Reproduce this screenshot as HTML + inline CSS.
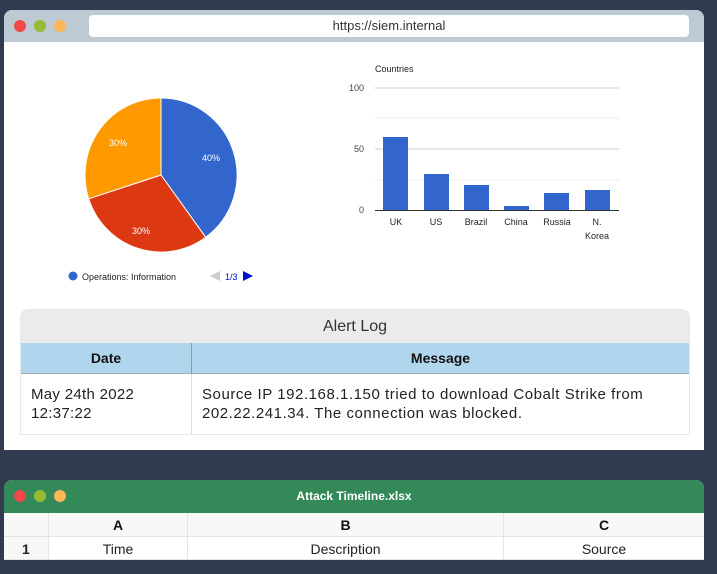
<!DOCTYPE html>
<html><head><style>
body{margin:0;width:717px;height:574px;background:#323a4f;position:relative;overflow:hidden;font-family:"Liberation Sans",sans-serif;}
.win{position:absolute;left:4px;width:700px;}
.dot{position:absolute;top:12px;width:12px;height:12px;border-radius:50%;}
</style></head><body>
<div class="win" style="top:10px;height:440px;background:#fff;border-radius:8px 8px 0 0;overflow:hidden">
  <div style="position:absolute;left:0;top:0;width:700px;height:32px;background:#bdc9d3"></div>
  <div class="dot" style="left:10px;top:10px;background:#f24848"></div>
  <div class="dot" style="left:30px;top:10px;background:#96ba32"></div>
  <div class="dot" style="left:50px;top:10px;background:#fdb755"></div>
  <div style="position:absolute;left:85px;top:5px;width:600px;height:22px;background:#fff;border-radius:4px;font-size:13px;line-height:22px;text-align:center;color:#333">https://siem.internal</div>
  <svg style="position:absolute;left:0;top:0" width="700" height="440" font-family="Liberation Sans, sans-serif">
    <path d="M157 165 L157 88 A76 77 0 0 1 201.7 227.3 Z" fill="#3366cc" stroke="#fff" stroke-width="1"/>
    <path d="M157 165 L201.7 227.3 A76 77 0 0 1 84.7 188.8 Z" fill="#dc3912" stroke="#fff" stroke-width="1"/>
    <path d="M157 165 L84.7 188.8 A76 77 0 0 1 157 88 Z" fill="#ff9900" stroke="#fff" stroke-width="1"/>
    <text x="198" y="151" font-size="9" fill="#fff">40%</text>
    <text x="105" y="136" font-size="9" fill="#fff">30%</text>
    <text x="128" y="224" font-size="9" fill="#fff">30%</text>
    <circle cx="69" cy="266" r="4.5" fill="#3366cc"/>
    <text x="78" y="270" font-size="9" fill="#222">Operations: Information</text>
    <path d="M216 261 L206 266 L216 271 Z" fill="#ccc"/>
    <text x="221" y="270" font-size="9" fill="#0011cc">1/3</text>
    <path d="M239 261 L249 266 L239 271 Z" fill="#0011cc"/>
    <text x="371" y="62" font-size="9" fill="#222">Countries</text>
    <line x1="371" y1="78" x2="615" y2="78" stroke="#ccc"/>
    <line x1="371" y1="108" x2="615" y2="108" stroke="#eee"/>
    <line x1="371" y1="139" x2="615" y2="139" stroke="#ccc"/>
    <line x1="371" y1="170" x2="615" y2="170" stroke="#eee"/>
    <text x="360" y="81" font-size="9" fill="#444" text-anchor="end">100</text>
    <text x="360" y="142" font-size="9" fill="#444" text-anchor="end">50</text>
    <text x="360" y="203" font-size="9" fill="#444" text-anchor="end">0</text>
    <g fill="#3366cc">
      <rect x="379" y="127" width="25" height="73"/>
      <rect x="420" y="164" width="25" height="36"/>
      <rect x="460" y="175" width="25" height="25"/>
      <rect x="500" y="196" width="25" height="4"/>
      <rect x="540" y="183" width="25" height="17"/>
      <rect x="581" y="180" width="25" height="20"/>
    </g>
    <line x1="371" y1="200.5" x2="615" y2="200.5" stroke="#333"/>
    <g font-size="9" fill="#222" text-anchor="middle">
      <text x="392" y="215">UK</text><text x="432" y="215">US</text><text x="472" y="215">Brazil</text>
      <text x="512" y="215">China</text><text x="553" y="215">Russia</text><text x="593" y="215">N.</text><text x="593" y="229">Korea</text>
    </g>
  </svg>
  <div style="position:absolute;left:16px;top:299px;width:668px;height:124px;border:1px solid #e8e8e8;border-radius:8px 8px 0 0;overflow:hidden;background:#fff">
    <div style="height:33px;background:#ebebeb;text-align:center;font-size:16px;line-height:33px;color:#333">Alert Log</div>
    <div style="height:30px;background:#b0d6ee;border-bottom:1px solid #aaa;display:flex;font-weight:bold;font-size:14px;line-height:30px;color:#111">
      <div style="width:170px;text-align:center;border-right:1px solid #999">Date</div>
      <div style="flex:1;text-align:center">Message</div>
    </div>
    <div style="display:flex;font-size:15px;line-height:19px;color:#222;height:60px">
      <div style="width:160px;padding:11px 0 0 10px;border-right:1px solid #ddd;letter-spacing:0.3px">May 24th 2022<br>12:37:22</div>
      <div style="flex:1;padding:11px 0 0 10px;letter-spacing:0.55px">Source IP 192.168.1.150 tried to download Cobalt Strike from<br>202.22.241.34. The connection was blocked.</div>
    </div>
  </div>
</div>
<div class="win" style="top:480px;height:80px;background:#fff;border-radius:8px 8px 0 0;overflow:hidden">
  <div style="height:33px;background:#338a58;color:#fff;font-weight:bold;font-size:12px;line-height:33px;text-align:center">Attack Timeline.xlsx</div>
  <div class="dot" style="left:10px;top:10px;background:#f24848"></div>
  <div class="dot" style="left:30px;top:10px;background:#96ba32"></div>
  <div class="dot" style="left:50px;top:10px;background:#fdb755"></div>
  <div style="display:flex;height:23px;background:#f8f8f8;font-weight:bold;font-size:14px;line-height:25px;color:#111;border-bottom:1px solid #e4e4e4">
    <div style="width:44px;border-right:1px solid #e4e4e4"></div>
    <div style="width:138px;text-align:center;border-right:1px solid #e4e4e4">A</div>
    <div style="width:315px;text-align:center;border-right:1px solid #e4e4e4">B</div>
    <div style="flex:1;text-align:center">C</div>
  </div>
  <div style="display:flex;height:22px;font-size:14px;line-height:24px;color:#222;border-bottom:1px solid #e4e4e4">
    <div style="width:44px;background:#f8f8f8;font-weight:bold;text-indent:18px;border-right:1px solid #e4e4e4">1</div>
    <div style="width:138px;text-align:center;border-right:1px solid #e4e4e4">Time</div>
    <div style="width:315px;text-align:center;border-right:1px solid #e4e4e4">Description</div>
    <div style="flex:1;text-align:center">Source</div>
  </div>
</div>
</body></html>
